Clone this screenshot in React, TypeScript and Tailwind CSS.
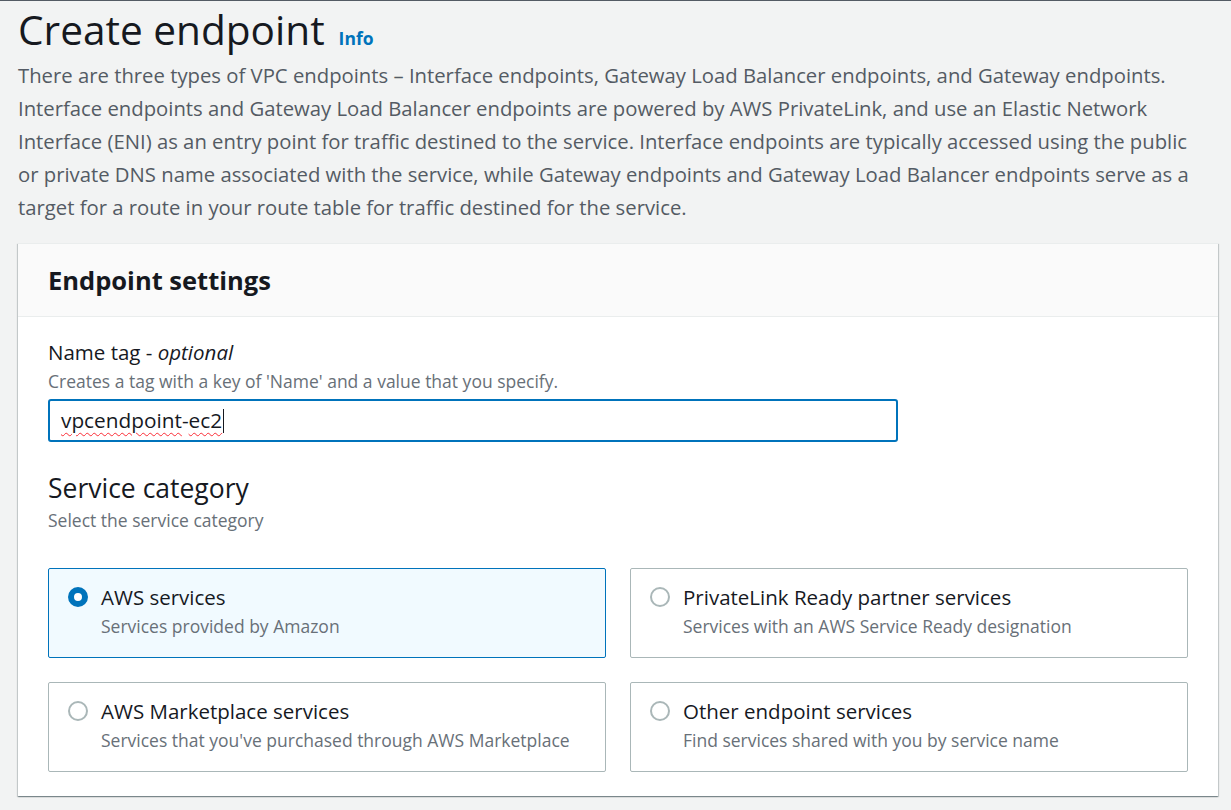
import React from "react";

const font = { fontFamily: '"Open Sans", "Noto Sans", sans-serif' };

function Tile({ title, desc, selected }: { title: string; desc: string; selected?: boolean }) {
  return (
    <div
      className={
        "h-[90px] rounded-[2px] border pl-[19px] pt-[14px] " +
        (selected ? "border-[#0073bb] bg-[#f1faff]" : "border-[#aab7b8] bg-white")
      }
    >
      <div className="flex items-center gap-[13px]">
        {selected ? (
          <span className="h-[20px] w-[20px] shrink-0 rounded-full border-[6px] border-[#0073bb] bg-white" />
        ) : (
          <span className="h-[20px] w-[20px] shrink-0 rounded-full border-2 border-[#aab7b8] bg-white" />
        )}
        <span className="text-[20.5px] leading-[28px] text-[#16191f]">{title}</span>
      </div>
      <div className="pl-[33px] pt-[2px] text-[17.5px] leading-[26px] text-[#687078]">{desc}</div>
    </div>
  );
}

export default function App() {
  return (
    <div style={font} className="h-[810px] w-[1231px] overflow-hidden border-t border-[#545b64] bg-[#f2f3f3]">
      <div className="pl-[18px] pt-[4px]">
        <div className="flex items-end gap-[14px]">
          <h1 className="text-[40.6px] leading-[50px] text-[#16191f]">Create endpoint</h1>
          <span className="pb-[6px] text-[17.5px] font-bold leading-[22px] text-[#0073bb]">Info</span>
        </div>
        <p className="mt-[4px] w-[1180px] text-[20.3px] leading-[33px] text-[#545b64]">
          There are three types of VPC endpoints – Interface endpoints, Gateway Load Balancer endpoints, and Gateway endpoints. Interface endpoints and Gateway Load Balancer endpoints are powered by AWS PrivateLink, and use an Elastic Network Interface (ENI) as an entry point for traffic destined to the service. Interface endpoints are typically accessed using the public or private DNS name associated with the service, while Gateway endpoints and Gateway Load Balancer endpoints serve as a target for a route in your route table for traffic destined for the service.
        </p>
        <div className="mt-[19px] w-[1200px] border-t border-[#eaeded] bg-white shadow-[0_1px_1px_0_rgba(0,28,36,0.3),1px_1px_1px_0_rgba(0,28,36,0.15),-1px_1px_1px_0_rgba(0,28,36,0.15)]">
          <div className="flex h-[73px] items-center border-b border-[#eaeded] bg-[#fafafa] pl-[30px]">
            <h2 className="text-[25.5px] font-bold text-[#16191f]">Endpoint settings</h2>
          </div>
          <div className="pl-[30px] pr-[30px] pt-[21px] pb-[24px]">
            <div className="text-[20.5px] leading-[28px] text-[#16191f]">
              Name tag - <i>optional</i>
            </div>
            <div className="mt-[2px] text-[17.5px] leading-[26px] text-[#687078]">
              Creates a tag with a key of 'Name' and a value that you specify.
            </div>
            <div className="mt-[5px] flex h-[43px] w-[850px] items-center rounded-[3px] border-2 border-[#0073bb] pl-[11px] text-[20.8px] text-[#16191f]">
              <span className="underline decoration-wavy decoration-red-500 decoration-1 underline-offset-4">vpcendpoint</span>
              <span>-</span>
              <span className="underline decoration-wavy decoration-red-500 decoration-1 underline-offset-4">ec2</span>
              <span className="ml-[1px] h-[24px] w-px bg-[#16191f]" />
            </div>
            <h3 className="mt-[29px] text-[26.5px] leading-[34px] text-[#16191f]">Service category</h3>
            <div className="mt-[2px] text-[17.5px] leading-[26px] text-[#687078]">Select the service category</div>
            <div className="mt-[35px] grid w-[1140px] grid-cols-2 gap-x-[24px] gap-y-[24px]">
              <Tile title="AWS services" desc="Services provided by Amazon" selected />
              <Tile title="PrivateLink Ready partner services" desc="Services with an AWS Service Ready designation" />
              <Tile title="AWS Marketplace services" desc="Services that you've purchased through AWS Marketplace" />
              <Tile title="Other endpoint services" desc="Find services shared with you by service name" />
            </div>
          </div>
        </div>
      </div>
    </div>
  );
}
